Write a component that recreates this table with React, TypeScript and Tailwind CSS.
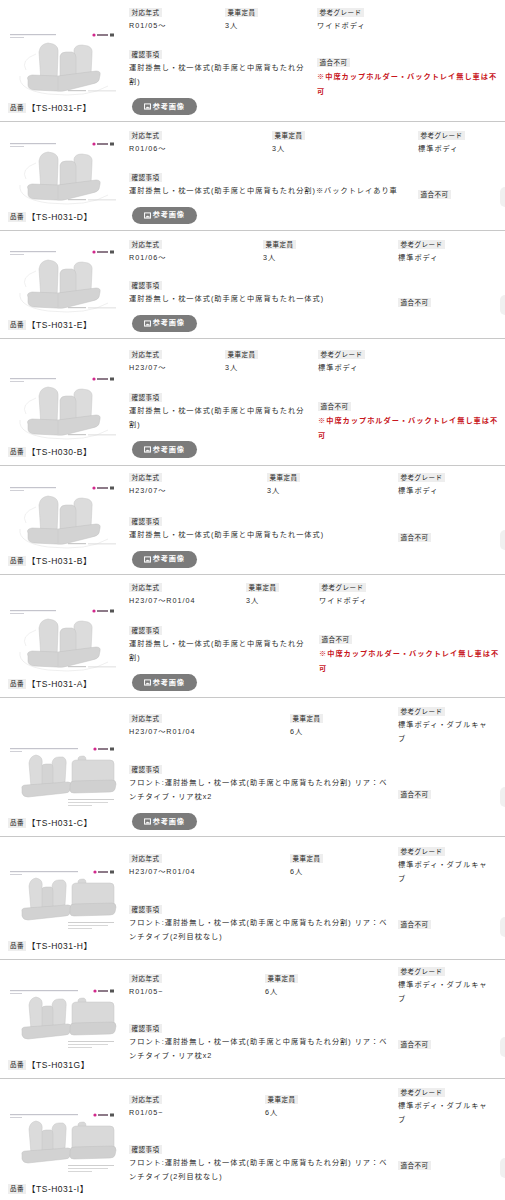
import React from "react";

type Row = {
  h: string;
  cols: string;
  pt: string;
  gap: string;
  year: string;
  seats: string;
  grade: string[];
  notes: string[];
  ngMt: string;
  red: boolean;
  btn: boolean;
  code: string;
  six: boolean;
  shape: boolean;
};

const NOTE_A = ["運肘掛無し・枕一体式(助手席と中席背もたれ分", "割)"];
const NOTE_B = ["運肘掛無し・枕一体式(助手席と中席背もたれ分割)※バックトレイあり車"];
const NOTE_C = ["運肘掛無し・枕一体式(助手席と中席背もたれ一体式)"];
const NOTE_D = ["フロント:運肘掛無し・枕一体式(助手席と中席背もたれ分割) リア：ベ", "ンチタイプ・リア枕x2"];
const NOTE_E = ["フロント:運肘掛無し・枕一体式(助手席と中席背もたれ分割) リア：ベ", "ンチタイプ(2列目枕なし)"];
const GRADE2 = ["標準ボディ・ダブルキャ", "ブ"];
const RED = ["※中席カップホルダー・バックトレイ無し車は不", "可"];

const rows: Row[] = [
  { h: "h-[122px]", cols: "grid-cols-[96px_92px_188px]", pt: "pt-[8px]", gap: "gap-y-[17px]", year: "R01/05～", seats: "3人", grade: ["ワイドボディ"], notes: NOTE_A, ngMt: "mt-[8px]", red: true, btn: true, code: "TS-H031-F", six: false, shape: false },
  { h: "h-[109px]", cols: "grid-cols-[143px_146px_87px]", pt: "pt-[9px]", gap: "gap-y-[17px]", year: "R01/06～", seats: "3人", grade: ["標準ボディ"], notes: NOTE_B, ngMt: "mt-[17px]", red: false, btn: true, code: "TS-H031-D", six: false, shape: true },
  { h: "h-[108px]", cols: "grid-cols-[134px_135px_107px]", pt: "pt-[9px]", gap: "gap-y-[16px]", year: "R01/06～", seats: "3人", grade: ["標準ボディ"], notes: NOTE_C, ngMt: "mt-[17px]", red: false, btn: true, code: "TS-H031-E", six: false, shape: true },
  { h: "h-[127px]", cols: "grid-cols-[96px_93px_187px]", pt: "pt-[11px]", gap: "gap-y-[18px]", year: "H23/07～", seats: "3人", grade: ["標準ボディ"], notes: NOTE_A, ngMt: "mt-[9px]", red: true, btn: true, code: "TS-H030-B", six: false, shape: false },
  { h: "h-[109px]", cols: "grid-cols-[138px_131px_107px]", pt: "pt-[7px]", gap: "gap-y-[19px]", year: "H23/07～", seats: "3人", grade: ["標準ボディ"], notes: NOTE_C, ngMt: "mt-[16px]", red: false, btn: true, code: "TS-H031-B", six: false, shape: true },
  { h: "h-[123px]", cols: "grid-cols-[117px_73px_186px]", pt: "pt-[8px]", gap: "gap-y-[18px]", year: "H23/07～R01/04", seats: "3人", grade: ["ワイドボディ"], notes: NOTE_A, ngMt: "mt-[9px]", red: true, btn: true, code: "TS-H031-A", six: false, shape: false },
  { h: "h-[139px]", cols: "grid-cols-[161px_108px_107px]", pt: "pt-[9px]", gap: "gap-y-[18.5px]", year: "H23/07～R01/04", seats: "6人", grade: GRADE2, notes: NOTE_D, ngMt: "mt-[25px]", red: false, btn: true, code: "TS-H031-C", six: true, shape: true },
  { h: "h-[123px]", cols: "grid-cols-[161px_108px_107px]", pt: "pt-[10px]", gap: "gap-y-[18.5px]", year: "H23/07～R01/04", seats: "6人", grade: GRADE2, notes: NOTE_E, ngMt: "mt-[15px]", red: false, btn: false, code: "TS-H031-H", six: true, shape: true },
  { h: "h-[119px]", cols: "grid-cols-[136px_133px_107px]", pt: "pt-[7px]", gap: "gap-y-[17.5px]", year: "R01/05~", seats: "6人", grade: GRADE2, notes: NOTE_D, ngMt: "mt-[16px]", red: false, btn: false, code: "TS-H031G", six: true, shape: true },
  { h: "h-[124px]", cols: "grid-cols-[136px_133px_107px]", pt: "pt-[9px]", gap: "gap-y-[17.5px]", year: "R01/05~", seats: "6人", grade: GRADE2, notes: NOTE_E, ngMt: "mt-[16px]", red: false, btn: false, code: "TS-H031-I", six: true, shape: true },
];

function Label({ children }: { children: React.ReactNode }) {
  return (
    <div className="w-fit bg-[#eeeeee] px-[2.5px] text-[6.5px] leading-[9px] tracking-[0.5px] text-[#222222] mb-[1.5px] whitespace-nowrap">
      {children}
    </div>
  );
}

function Lines({ lines }: { lines: string[] }) {
  return (
    <>
      {lines.map((l, i) => (
        <div key={i} className="text-[7.2px] leading-[14.5px] tracking-[1px] whitespace-nowrap text-[#2a2a2a]">
          {l}
        </div>
      ))}
    </>
  );
}

function Seat3() {
  return (
    <svg width="110" height="72" viewBox="0 0 110 72">
      <rect x="2" y="4" width="46" height="1.2" fill="#c4c4cc" />
      <rect x="2" y="7" width="14" height="1" fill="#d0d0d6" />
      <circle cx="86" cy="5" r="1.6" fill="#d2288c" />
      <rect x="89" y="4" width="11" height="2" fill="#8d7a88" />
      <rect x="102" y="3.5" width="4" height="3" fill="#555555" />
      <path d="M12 46 Q 10 60 40 64 Q 80 68 100 56" fill="none" stroke="#e4e4e4" strokeWidth="0.6" />
      <path d="M18 40 Q 12 30 28 24" fill="none" stroke="#e6e6e6" strokeWidth="0.6" />
      <path d="M66 45 L66 20 Q 67 15 74 15 L80 16 Q 85 18 84 24 L83 44 Z" fill="#dcdcdc" stroke="#c6c6c6" strokeWidth="0.5" />
      <path d="M52 48 L52 26 Q 53 22 58 22 L64 22 Q 68 23 68 27 L68 47 Z" fill="#d6d6d6" stroke="#c4c4c4" strokeWidth="0.5" />
      <path d="M33 52 L31 22 Q 32 14 40 13 L45 14 Q 51 16 50 24 L49 50 Z" fill="#dadada" stroke="#c4c4c4" strokeWidth="0.5" />
      <path d="M20 50 Q 18 46 24 45 L50 46 L88 41 Q 93 41 92 45 L91 50 Q 90 53 84 54 L60 60 Q 54 62 48 61 L26 60 Q 20 59 20 55 Z" fill="#d3d3d3" stroke="#c0c0c0" strokeWidth="0.5" />
      <path d="M50 47 L50 60" stroke="#c4c4c4" strokeWidth="0.5" />
      <rect x="60" y="60" width="18" height="1.2" fill="#c9c9c9" />
      <rect x="80" y="60.5" width="28" height="0.8" fill="#d6d6d6" />
    </svg>
  );
}

function Seat6() {
  return (
    <svg width="110" height="72" viewBox="0 0 110 72">
      <rect x="2" y="3" width="68" height="1.2" fill="#c4c4cc" />
      <rect x="2" y="6" width="12" height="1" fill="#d0d0d6" />
      <circle cx="87" cy="4" r="1.6" fill="#d2288c" />
      <rect x="90" y="3" width="10" height="2" fill="#8d7a88" />
      <rect x="102" y="2.5" width="4" height="3" fill="#555555" />
      <path d="M44 38 L44 18 Q 45 12 51 12 L55 12 Q 59 14 58 20 L57 37 Z" fill="#dadada" stroke="#c6c6c6" strokeWidth="0.5" />
      <path d="M33 40 L33 22 Q 34 19 38 19 L43 19 Q 45 20 45 23 L45 39 Z" fill="#d4d4d4" stroke="#c4c4c4" strokeWidth="0.5" />
      <path d="M23 42 L21 18 Q 22 11 28 10 L31 11 Q 35 13 34 19 L34 41 Z" fill="#dbdbdb" stroke="#c4c4c4" strokeWidth="0.5" />
      <path d="M14 44 Q 13 40 18 40 L60 37 Q 63 37 63 40 L62 45 Q 61 48 57 48 L20 52 Q 15 52 14 48 Z" fill="#d2d2d2" stroke="#c0c0c0" strokeWidth="0.5" />
      <path d="M70 16 L70 13 Q 71 11 74 11 L76 11 Q 78 12 78 14 L78 16 Z" fill="#d8d8d8" stroke="#c4c4c4" strokeWidth="0.4" />
      <path d="M64 38 L64 19 Q 64 15 69 15 L102 15 Q 106 15 106 19 L106 36 Z" fill="#d9d9d9" stroke="#c4c4c4" strokeWidth="0.5" />
      <path d="M62 40 Q 62 36 66 36 L104 35 Q 108 35 108 39 L107 44 Q 106 47 102 47 L66 48 Q 62 48 62 45 Z" fill="#d0d0d0" stroke="#c0c0c0" strokeWidth="0.5" />
      <rect x="60" y="54" width="46" height="0.9" fill="#c9c9c9" />
      <rect x="60" y="57" width="40" height="0.9" fill="#d3d3d3" />
      <rect x="60" y="60" width="24" height="0.9" fill="#d3d3d3" />
    </svg>
  );
}

function RefButton() {
  return (
    <div className="mt-[8.5px] ml-[3px] flex h-[17px] w-[65px] items-center justify-center gap-[1.5px] rounded-full bg-[#7b7b7b]">
      <svg width="7" height="7" viewBox="0 0 10 10">
        <rect x="0.8" y="1.3" width="8.4" height="7.4" fill="none" stroke="#ffffff" strokeWidth="1.4" />
        <path d="M2 8 L4.5 5 L6 6.5 L7 5.5 L8.5 8 Z" fill="#ffffff" />
      </svg>
      <span className="text-[7.2px] font-bold leading-none tracking-[0.8px] text-white">参考画像</span>
    </div>
  );
}

function ProductRow({ r }: { r: Row }) {
  return (
    <div className={`flex border-b border-[#c8c8c8] ${r.h}`}>
      <div className="flex w-[129px] shrink-0 flex-col justify-end pb-[7px] pl-[8px]">
        {r.six ? <Seat6 /> : <Seat3 />}
        <div className="flex h-[12px] items-center">
          <span className="bg-[#eeeeee] px-[2px] text-[6.5px] leading-[10px] tracking-[0.5px] text-[#222222]">品番</span>
          <span className="ml-[1px] text-[8.5px] leading-[12px] tracking-[0.5px] text-[#222222]">【{r.code}】</span>
        </div>
      </div>
      <div className={`grid w-[376px] shrink-0 content-start ${r.cols} ${r.pt} ${r.gap}`}>
        <div className="self-center">
          <Label>対応年式</Label>
          <Lines lines={[r.year]} />
        </div>
        <div className="self-center">
          <Label>乗車定員</Label>
          <Lines lines={[r.seats]} />
        </div>
        <div className="self-center">
          <Label>参考グレード</Label>
          <Lines lines={r.grade} />
        </div>
        <div className="col-span-2 self-start">
          <Label>確認事項</Label>
          <Lines lines={r.notes} />
          {r.btn && <RefButton />}
        </div>
        <div className={`flex items-start self-start ${r.ngMt}`}>
          <div className="flex-1">
            <Label>適合不可</Label>
            {r.red &&
              RED.map((l, i) => (
                <div key={i} className="whitespace-nowrap text-[7.2px] font-bold leading-[15px] tracking-[1px] text-[#c8161d]">
                  {l}
                </div>
              ))}
          </div>
          {r.shape && <div className="mt-[-3.5px] h-[20px] w-[5px] shrink-0 rounded-l-[10px] bg-[#f0f0f0]" />}
        </div>
      </div>
    </div>
  );
}

export default function App() {
  return (
    <div className="w-[505px] overflow-hidden bg-white font-['Liberation_Sans','Noto_Sans_CJK_JP',sans-serif] text-[#333333]">
      {rows.map((r, i) => (
        <ProductRow key={i} r={r} />
      ))}
    </div>
  );
}
